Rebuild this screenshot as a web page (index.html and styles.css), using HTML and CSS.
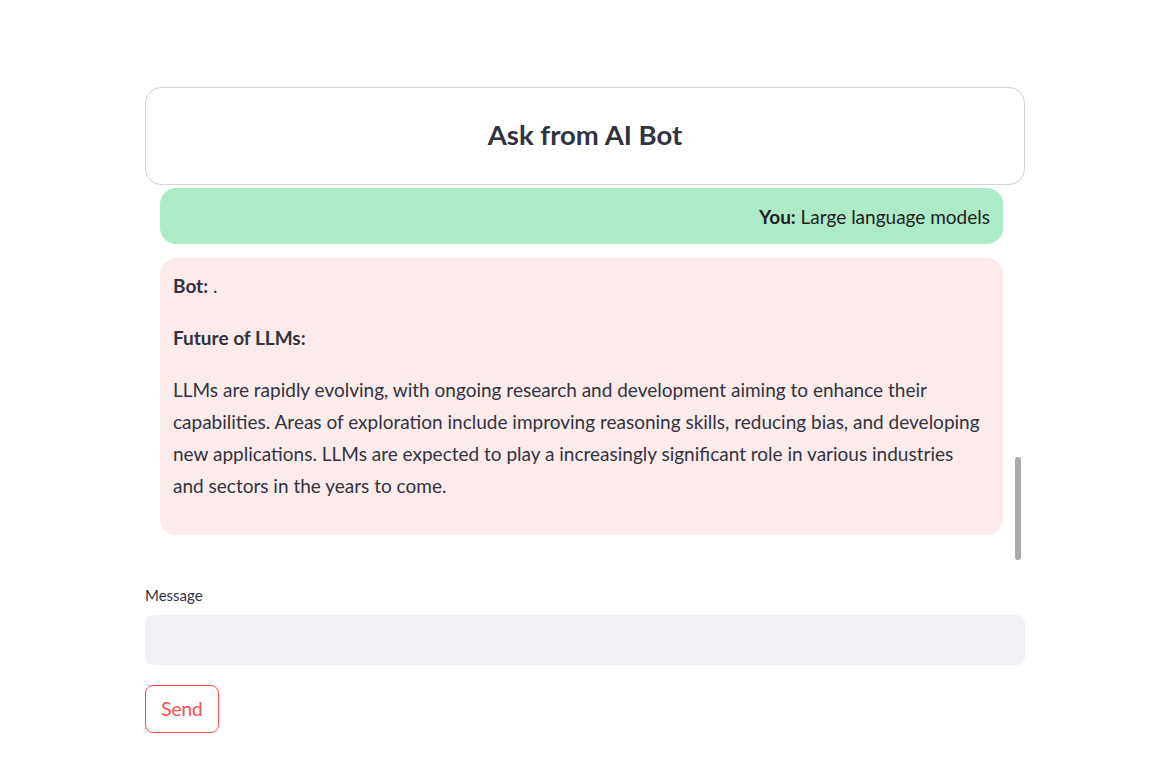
FILE: index.html
```html
<!DOCTYPE html>
<html lang="en">
<head>
<meta charset="utf-8">
<title>Ask from AI Bot</title>
<link rel="stylesheet" href="styles.css">
</head>
<body>
<main class="page">
  <header class="title-box">
    <h1 class="title">Ask from AI Bot</h1>
  </header>
  <section class="chat">
    <div class="msg msg-user"><strong>You:</strong> Large language models</div>
    <div class="msg msg-bot">
      <p><strong>Bot:</strong> .</p>
      <p><strong>Future of LLMs:</strong></p>
      <p>LLMs are rapidly evolving, with ongoing research and development aiming to enhance their capabilities. Areas of exploration include improving reasoning skills, reducing bias, and developing new applications. LLMs are expected to play a increasingly significant role in various industries and sectors in the years to come.</p>
    </div>
    <div class="scroll-thumb"></div>
  </section>
  <form class="composer">
    <label class="label" for="msg">Message</label>
    <input class="input" id="msg" type="text">
    <button class="send" type="button">Send</button>
  </form>
</main>
</body>
</html>
```

FILE: styles.css
```css
* { box-sizing: border-box; }
body {
  margin: 0;
  background: #ffffff;
  color: #31333f;
  font-family: Lato, "Noto Sans", sans-serif;
}
.page {
  width: 880px;
  margin: 87px 0 0 145px;
}
.title-box {
  height: 98px;
  padding-bottom: 3px;
  border: 1px solid #d3d3d6;
  border-radius: 16px;
  display: flex;
  align-items: center;
  justify-content: center;
}
.title {
  margin: 0;
  font-size: 27.5px;
  font-weight: 700;
  color: #31333f;
}
.chat {
  position: relative;
  height: 375px;
  padding: 3px 22px 0 15px;
  display: flex;
  flex-direction: column;
  gap: 14px;
}
.msg {
  border-radius: 16px;
  font-size: 19px;
  line-height: 32px;
}
.msg-user {
  background: #acebc7;
  height: 56px;
  padding: 13px 13px 11px;
  text-align: right;
  color: #1f2024;
}
.msg-bot {
  background: #fcebeb;
  padding: 12px 16px 13px 13px;
}
.msg-bot p { margin: 0 0 20px; }
strong { font-weight: 700; }
.scroll-thumb {
  position: absolute;
  right: 4px;
  top: 272px;
  width: 6px;
  height: 103px;
  border-radius: 3px;
  background: #a9a9ae;
}
.composer {
  display: flex;
  flex-direction: column;
  align-items: flex-start;
}
.label {
  margin-top: 25px;
  font-size: 15px;
  line-height: 20px;
  color: #31333f;
}
.input {
  margin-top: 10px;
  width: 100%;
  height: 50px;
  border: none;
  border-radius: 8px;
  background: #f0f2f6;
  outline: none;
}
.send {
  margin-top: 20px;
  width: 74px;
  height: 48px;
  padding-bottom: 2px;
  border: 1px solid #ff4b4b;
  border-radius: 8px;
  background: #fff;
  color: #ff4b4b;
  font-family: Lato, "Noto Sans", sans-serif;
  font-size: 19px;
}
```
